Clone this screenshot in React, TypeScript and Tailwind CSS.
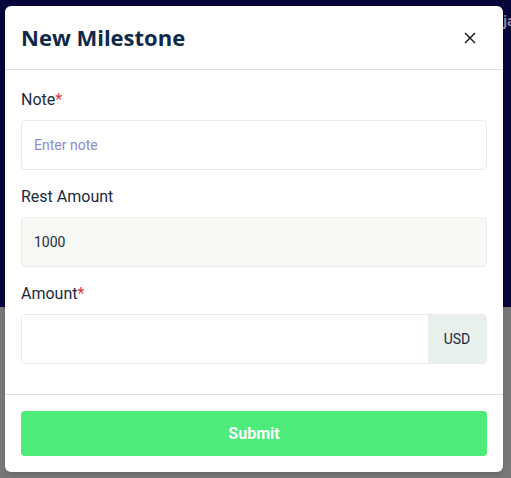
import React from "react";

const Field = ({
  label,
  required,
  children,
}: {
  label: string;
  required?: boolean;
  children: React.ReactNode;
}) => (
  <div className="flex flex-col mb-[15px]">
    <label className="text-[16px] leading-6 text-[#1c2a40] mb-2">
      {label}
      {required && <span className="text-[#e5333f]">*</span>}
    </label>
    {children}
  </div>
);

const App = () => {
  return (
    <div
      className="relative w-full h-[478px] overflow-hidden"
      style={{ fontFamily: "Roboto, 'Liberation Sans', sans-serif" }}
    >
      {/* page behind the overlay */}
      <div className="flex flex-col h-full">
        <div className="h-[307px] bg-[#07063a]"></div>
        <div className="flex-1 bg-[#787878]"></div>
      </div>
      <span className="absolute right-[-4px] top-[10px] text-[15px] font-medium text-[#9a9aae]">ja</span>

      {/* Modal */}
      <div className="absolute left-[5px] top-[6px] w-[498px] bg-white rounded-md shadow-md">
        <div className="h-[64px] flex items-center justify-between px-4 border-b border-[#dedde6]">
          <h2
            className="text-[22px] font-bold text-[#0d2848]"
            style={{ fontFamily: "'Open Sans', Lato, sans-serif" }}
          >
            New Milestone
          </h2>
          <button className="w-6 h-6 flex items-center justify-center text-[#111] mr-[5px]">
            <svg width="12" height="12" viewBox="0 0 12 12" fill="none" stroke="currentColor" strokeWidth="1.4">
              <path d="M1 1L11 11M11 1L1 11" />
            </svg>
          </button>
        </div>

        <div className="px-4 pt-[18px] pb-[15px]">
          <Field label="Note" required>
            <input
              className="h-[50px] rounded border border-[#ebebeb] px-3 text-[14px] text-[#1c2a40] placeholder:text-[#8c8bd0] outline-none"
              placeholder="Enter note"
            />
          </Field>
          <Field label="Rest Amount">
            <div className="h-[50px] rounded border border-[#ebebeb] bg-[#f8f8f4] px-3 flex items-center text-[14px] text-[#1c2a40]">
              1000
            </div>
          </Field>
          <Field label="Amount" required>
            <div className="h-[50px] rounded border border-[#ebebeb] flex">
              <input className="flex-1 min-w-0 px-3 text-[14px] outline-none rounded-l" />
              <div className="w-[58px] bg-[#e7f0eb] flex items-center justify-center text-[14px] text-[#1c2a40] rounded-r">
                USD
              </div>
            </div>
          </Field>
        </div>

        <div className="border-t border-[#dedde6] px-4 pt-4 pb-4">
          <button className="w-full h-[45px] rounded bg-[#4ceb7a] text-white text-[16px] font-bold">
            Submit
          </button>
        </div>
      </div>
    </div>
  );
};

export default App;
